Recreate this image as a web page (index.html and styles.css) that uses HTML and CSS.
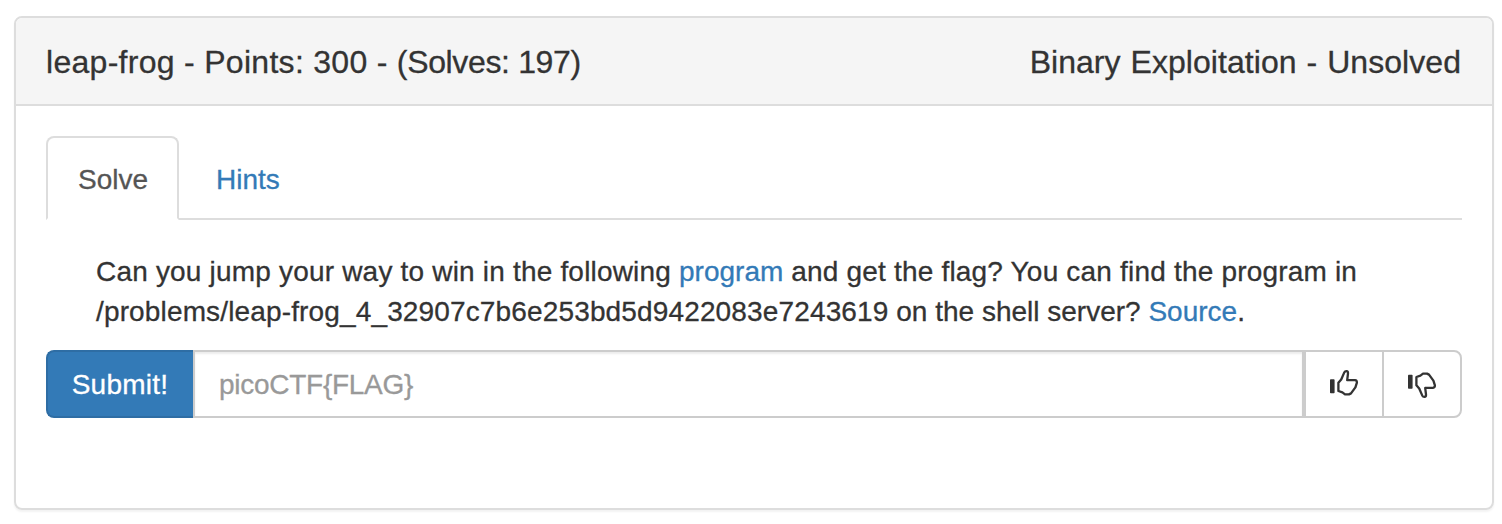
FILE: index.html
```html
<!DOCTYPE html>
<html lang="en">
<head>
<meta charset="utf-8">
<title>leap-frog</title>
<link rel="stylesheet" href="styles.css">
</head>
<body>
<section class="panel">
  <header class="panel-heading">
    <span class="title"><span class="points">leap-frog - Points: 300 - </span><span class="solves">(Solves: 197)</span></span>
    <span class="category">Binary Exploitation - Unsolved</span>
  </header>
  <div class="panel-body">
    <nav class="tabs">
      <a class="tab active">Solve</a>
      <a class="tab hints">Hints</a>
    </nav>
    <p class="description"><span class="wide">Can you jump your way to win in the following </span><a>program</a><span class="wide"> and get the flag? You can find the program in</span><br><span class="path">/problems/leap-frog_4_32907c7b6e253bd5d9422083e7243619</span> on the shell server? <a>Source</a>.</p>
    <form class="flag-form">
      <button class="submit" type="button">Submit!</button>
      <input class="flag" type="text" placeholder="picoCTF{FLAG}">
      <button class="vote" type="button" aria-label="Like">
        <svg class="icon" viewBox="0 0 50 50"><rect class="cuff" x="10" y="19.2" width="4.6" height="14" rx="0.8"/><path class="hand" d="M18.4 31V22.8L21.2 19.5L24.2 12.6Q25 11 26.5 11.1Q28.2 11.3 28 13.5L27.2 20.2H35Q37 20.4 36.9 22.6L35.4 27.4L31 33.4L29 34.4H25L22.4 32.4L18.4 31Z"/></svg>
      </button>
      <button class="vote vote-down" type="button" aria-label="Dislike">
        <svg class="icon" viewBox="0 0 50 50"><rect class="cuff" x="10" y="14.8" width="4.6" height="14" rx="0.8"/><path class="hand" d="M18.4 17V25.2L21.2 28.5L24.2 35.4Q25 37 26.5 36.9Q28.2 36.7 28 34.5L27.2 27.8H35Q37 27.6 36.9 25.4L35.4 20.6L31 14.6L29 13.6H25L22.4 15.6L18.4 17Z"/></svg>
      </button>
    </form>
  </div>
</section>
</body>
</html>
```
FILE: styles.css
```css
* { box-sizing: border-box; }
body {
  margin: 0;
  padding: 16px 8px 14px 14px;
  background: #fff;
  color: #333;
  font: 28px/40px "Liberation Sans", Arial, sans-serif;
  -webkit-text-stroke: 0.3px;
}
a { color: #337ab7; text-decoration: none; }
.panel {
  height: 494px;
  border: 2px solid #ddd;
  border-radius: 8px;
  box-shadow: 0 2px 2px rgba(0, 0, 0, .05);
}
.panel-heading {
  display: flex;
  justify-content: space-between;
  align-items: center;
  height: 88px;
  padding: 2px 31px 0 30px;
  border-bottom: 2px solid #ddd;
  border-radius: 6px 6px 0 0;
  background: #f5f5f5;
  font-size: 32px;
}
.points { letter-spacing: 0.29px; white-space: pre; }
.solves { letter-spacing: -0.35px; }
.category { letter-spacing: 0.05px; word-spacing: 1px; }
.panel-body { padding: 30px; }
.tabs {
  display: flex;
  gap: 4px;
  height: 84px;
  border-bottom: 2px solid #ddd;
}
.tab {
  width: 133px;
  height: 84px;
  padding: 22px 0 0 30px;
  border: 2px solid transparent;
  border-radius: 8px 8px 0 0;
  white-space: nowrap;
}
.tab.active {
  border-color: #ddd;
  border-bottom-color: #fff;
  background: #fff;
  color: #555;
}
.tab.hints { padding-left: 31px; }
.description { margin: 32px 0 18px; padding-left: 50px; white-space: nowrap; }
.wide { letter-spacing: 0.19px; }
.path { letter-spacing: 0.145px; }
.flag-form { display: flex; height: 68px; }
.submit {
  width: 148px;
  padding: 2px 2px 0 0;
  border: 2px solid #2e6da4;
  border-right: 0;
  border-radius: 8px 0 0 8px;
  background: #337ab7;
  color: #fff;
  font: inherit;
  letter-spacing: 0.25px;
  -webkit-text-stroke: 0.3px;
}
.flag {
  flex: 1;
  min-width: 0;
  margin-left: -1px;
  padding: 2px 24px 0;
  border: 2px solid #ccc;
  border-radius: 0;
  box-shadow: inset 0 2px 2px rgba(0, 0, 0, .075);
  font: inherit;
  letter-spacing: -0.27px;
  -webkit-text-stroke: 0.3px;
}
.flag::placeholder { color: #999; opacity: 1; }
.vote {
  display: flex;
  align-items: center;
  justify-content: center;
  width: 80px;
  padding: 2px 0 0 2px;
  border: 2px solid #ccc;
  background: #fff;
  color: #333;
}
.vote-down { margin-left: -2px; border-radius: 0 8px 8px 0; }
.icon { width: 50px; height: 50px; }
.cuff { fill: #333; }
.hand { fill: none; stroke: #333; stroke-width: 2.3; stroke-linejoin: round; }
```
